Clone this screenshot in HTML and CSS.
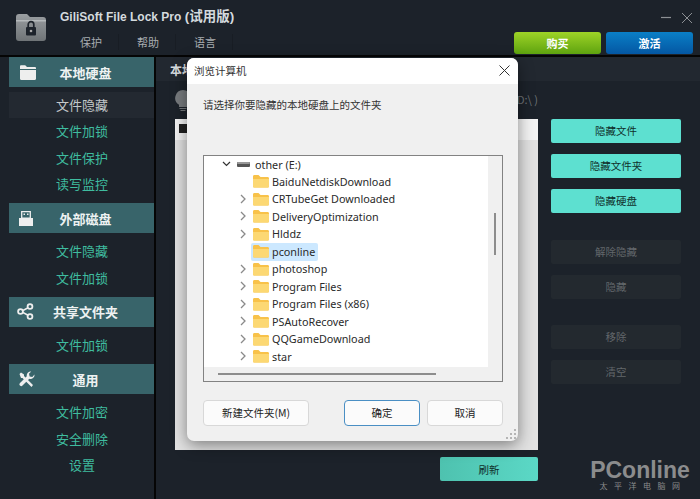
FILE: index.html
```html
<!doctype html>
<html lang="zh">

<head>
  <meta charset="utf-8">
  <title>GiliSoft File Lock Pro</title>
  <link rel="stylesheet" href="styles.css">
</head>

<body>
  <svg class="defs" width="0" height="0">
    <symbol id="folder" viewBox="0 0 16 14">
      <path d="M0 2.500C0 1.500.6 1 1.500 1h4l2 2h7c.9 0 1.500.5 1.500 1.500V12c0 1-.6 1.500-1.500 1.500h-13C.6 13.500 0 13 0 12z" fill="#f8c24a" />
      <path d="M0 5h16v7c0 1-.6 1.500-1.500 1.500h-13C.6 13.500 0 13 0 12z" fill="#fcd873" />
    </symbol>
    <symbol id="chev" viewBox="0 0 8 10">
      <path d="M2 1l4 4-4 4" fill="none" stroke="#8a8a8a" stroke-width="1.300" />
    </symbol>
    <linearGradient id="app-fill" x1="0" y1="0" x2="0" y2="1">
      <stop offset="0" stop-color="#9a9ea1" />
      <stop offset="1" stop-color="#6f7477" />
    </linearGradient>
  </svg>

  <header class="titlebar">
    <svg class="app-icon" viewBox="0 0 30 28">
      <path d="M0 4c0-2 1-3 3-3h8l3 3h13c2 0 3 1 3 3v18c0 2-1 3-3 3H3c-2 0-3-1-3-3z" fill="url(#app-fill)" />
      <path d="M0 7h30v1.500H0z" fill="#b5b9bb" />
      <rect x="10" y="14" width="10" height="8.500" rx="1" fill="#1d232b" />
      <path d="M12.200 14v-2.500a2.800 2.800 0 0 1 5.600 0V14" fill="none" stroke="#1d232b" stroke-width="1.700" />
      <circle cx="15" cy="18" r="1.300" fill="#aaa" />
    </svg>
    <div class="title-text">
      <div class="app-name">GiliSoft File Lock Pro <span class="trial">(试用版)</span></div>
      <nav class="menu">
        <span>保护</span>
        <span>帮助</span>
        <span>语言</span>
      </nav>
    </div>
    <div class="title-right">
      <div class="win-btns">
        <svg width="12" height="12" viewBox="0 0 12 12"><path d="M1 5.500h10" stroke="#8c9094" stroke-width="1.200" /></svg>
        <svg width="12" height="12" viewBox="0 0 12 12"><path d="M1 1l10 10M11 1L1 11" stroke="#8c9094" stroke-width="1" /></svg>
      </div>
      <div class="buy-btns">
        <div class="buy green">购买</div>
        <div class="buy blue">激活</div>
      </div>
    </div>
  </header>

  <div class="content">
    <aside class="sidebar">
      <section class="group">
        <h2 class="group-head">
          <svg class="ico-folder" width="16" height="15" viewBox="0 0 16 15"><path d="M0 1.500C0 .8.500.3 1.200.3h4l1.800 1.700h7.800c.7 0 1.200.5 1.200 1.200v.8H0z" fill="#eee" /><path d="M0 5h16v8.800c0 .7-.5 1.200-1.200 1.200H1.200C.5 15 0 14.500 0 13.800z" fill="#eee" /></svg>
          <span>本地硬盘</span>
        </h2>
        <ul class="items">
          <li class="active">文件隐藏</li>
          <li>文件加锁</li>
          <li>文件保护</li>
          <li>读写监控</li>
        </ul>
      </section>
      <section class="group">
        <h2 class="group-head">
          <svg class="ico-usb" width="14" height="15" viewBox="0 0 14 15"><path d="M2.700.7h8.600v6.500H2.700z" fill="none" stroke="#eee" stroke-width="1.300" /><path d="M0 7h14v8H0z" fill="#eee" /><path d="M4.500 2.500h1.500V4H4.500zM8 2.500h1.500V4H8z" fill="#eee" /></svg>
          <span>外部磁盘</span>
        </h2>
        <ul class="items">
          <li>文件隐藏</li>
          <li>文件加锁</li>
        </ul>
      </section>
      <section class="group">
        <h2 class="group-head">
          <svg class="ico-share" width="17" height="17" viewBox="0 0 17 17"><path d="M12.500 4L4 8.500l8.500 4.500" fill="none" stroke="#eee" stroke-width="1.500" /><g fill="#38646a" stroke="#eee" stroke-width="1.800"><circle cx="13" cy="3.500" r="2.400" /><circle cx="3.500" cy="8.500" r="2.400" /><circle cx="13" cy="13.500" r="2.400" /></g></svg>
          <span>共享文件夹</span>
        </h2>
        <ul class="items">
          <li>文件加锁</li>
        </ul>
      </section>
      <section class="group">
        <h2 class="group-head">
          <svg class="ico-tools" width="17" height="17" viewBox="0 0 17 17"><path d="M1.500 3L3 1.500l3 2v1.600l9 9L13.500 16l-9-9H3z" fill="#eee" /><path d="M16.500 3.500a4 4 0 0 1-5.200 4.200L4.500 14.500a1.700 1.700 0 0 1-2.500-2.500l6.800-6.800A4 4 0 0 1 13.200.5l-2.200 2.200.6 2.700 2.700.6z" fill="#eee" /></svg>
          <span>通用</span>
        </h2>
        <ul class="items">
          <li>文件加密</li>
          <li>安全删除</li>
          <li>设置</li>
        </ul>
      </section>
    </aside>

    <main class="main">
      <div class="tab-band">本地</div>
      <div class="work">
        <div class="list-col">
          <div class="hint">
            <svg width="16" height="21" viewBox="0 0 16 21"><path d="M8 0a8 8 0 0 0-4 14.800V17h8v-2.200A8 8 0 0 0 8 0z" fill="#777b7e" /><path d="M4.500 18.500h7M5.500 20.500h5" stroke="#777b7e" /></svg>
            <span class="hint-path">D:\ )</span>
          </div>
          <div class="list-panel">
            <div class="list-head"><i class="check"></i></div>
          </div>
          <div class="list-foot">
            <button class="teal refresh">刷新</button>
          </div>
        </div>
        <div class="action-col">
          <button class="teal">隐藏文件</button>
          <button class="teal">隐藏文件夹</button>
          <button class="teal">隐藏硬盘</button>
          <button class="off gap-a">解除隐藏</button>
          <button class="off">隐藏</button>
          <button class="off gap-b">移除</button>
          <button class="off">清空</button>
        </div>
      </div>
    </main>
  </div>

  <div class="logo">
    <div class="logo-name">PConline</div>
    <div class="logo-sub">太平洋电脑网</div>
  </div>

  <div class="dialog">
    <div class="dlg-title">
      <span>浏览计算机</span>
      <svg width="11" height="11" viewBox="0 0 11 11"><path d="M.5.500l10 10M10.500.500l-10 10" stroke="#333" stroke-width="1" /></svg>
    </div>
    <div class="dlg-body">
      <p class="prompt">请选择你要隐藏的本地硬盘上的文件夹</p>
      <div class="tree-box">
        <div class="tree-inner">
          <ul class="tree">
            <li class="drive">
              <svg class="open" width="9" height="6" viewBox="0 0 9 6"><path d="M1 1l3.500 3.500L8 1" fill="none" stroke="#333" stroke-width="1.200" /></svg>
              <svg class="disk" width="13" height="5" viewBox="0 0 13 5"><rect width="13" height="5" rx="1" fill="#555" /><rect y="0" width="13" height="2" rx="1" fill="#999" /></svg>
              <span>other (E:)</span>
            </li>
            <li class="leaf"><svg class="fld"><use href="#folder" /></svg><span>BaiduNetdiskDownload</span></li>
            <li><svg class="chv"><use href="#chev" /></svg><svg class="fld"><use href="#folder" /></svg><span>CRTubeGet Downloaded</span></li>
            <li><svg class="chv"><use href="#chev" /></svg><svg class="fld"><use href="#folder" /></svg><span>DeliveryOptimization</span></li>
            <li><svg class="chv"><use href="#chev" /></svg><svg class="fld"><use href="#folder" /></svg><span>Hlddz</span></li>
            <li class="leaf selected"><svg class="fld"><use href="#folder" /></svg><span>pconline</span></li>
            <li><svg class="chv"><use href="#chev" /></svg><svg class="fld"><use href="#folder" /></svg><span>photoshop</span></li>
            <li><svg class="chv"><use href="#chev" /></svg><svg class="fld"><use href="#folder" /></svg><span>Program Files</span></li>
            <li><svg class="chv"><use href="#chev" /></svg><svg class="fld"><use href="#folder" /></svg><span>Program Files (x86)</span></li>
            <li><svg class="chv"><use href="#chev" /></svg><svg class="fld"><use href="#folder" /></svg><span>PSAutoRecover</span></li>
            <li><svg class="chv"><use href="#chev" /></svg><svg class="fld"><use href="#folder" /></svg><span>QQGameDownload</span></li>
            <li><svg class="chv"><use href="#chev" /></svg><svg class="fld"><use href="#folder" /></svg><span>star</span></li>
          </ul>
        </div>
        <div class="vscroll"><i></i></div>
        <div class="hscroll"><i></i></div>
      </div>
      <div class="dlg-btns">
        <button class="win-btn new-folder">新建文件夹(M)</button>
        <button class="win-btn ok">确定</button>
        <button class="win-btn">取消</button>
      </div>
    </div>
    <svg class="grip" width="10" height="10" viewBox="0 0 10 10"><path d="M8 0h2v2H8zM4 4h2v2H4zM8 4h2v2H8zM0 8h2v2H0zM4 8h2v2H4zM8 8h2v2H8z" fill="#b5b5b5" /></svg>
  </div>
</body>

</html>
```

FILE: styles.css
```css
* {
  box-sizing: border-box;
}

html,
body {
  margin: 0;
  height: 499px;
  overflow: hidden;
}

body {
  position: relative;
  background: #1c222a;
  font-family: "Noto Sans CJK SC", sans-serif;
}

.defs {
  position: absolute;
}

ul {
  list-style: none;
  margin: 0;
  padding: 0;
}

/* title bar */
.titlebar {
  display: flex;
  height: 57px;
  padding: 13px 7px 0 16px;
  background: #1c222a;
  border-bottom: 2px solid #050505;
}

.app-icon {
  width: 30px;
  height: 28px;
}

.title-text {
  margin: -5px 0 0 14px;
}

.app-name {
  color: #d4dade;
  font-family: "Liberation Sans", "Noto Sans CJK SC", sans-serif;
  font-size: 12px;
  font-weight: 700;
  line-height: 18px;
  white-space: nowrap;
}

.trial {
  font-size: 13.500px;
}

.menu {
  display: flex;
  margin: 8px 0 0 2px;
  color: #a8adb1;
  font-size: 11px;
  line-height: 16px;
}

.menu span {
  width: 57px;
  padding-left: 18px;
  border-right: 1px solid #181d24;
}

.title-right {
  margin-left: auto;
}

.win-btns {
  display: flex;
  justify-content: flex-end;
  gap: 9px;
  height: 19px;
  margin-top: -3px;
}

.win-btns svg {
  margin-top: 2px;
}

.buy-btns {
  display: flex;
  gap: 5px;
  margin-top: 3px;
}

.buy {
  width: 87px;
  height: 22px;
  border-radius: 3px;
  color: #fff;
  font-size: 11px;
  font-weight: 700;
  line-height: 22px;
  text-align: center;
}

.green {
  background: linear-gradient(#9ed327, #5ea30f);
}

.blue {
  background: linear-gradient(#0a7fc6, #0457a3);
}

/* sidebar and main */
.content {
  display: flex;
  height: 442px;
}

.sidebar {
  width: 156px;
  padding-left: 9px;
  border-right: 2px solid #050505;
}

.group {
  margin-bottom: 6px;
}

.group-head {
  display: grid;
  grid-template-columns: 33px 87px;
  align-items: center;
  height: 30px;
  margin: 0;
  background: #38646a;
  color: #eef2f2;
  font-size: 13px;
  font-weight: 700;
}

.ico-folder {
  margin-left: 11px;
}

.ico-usb {
  margin-left: 10px;
}

.ico-share {
  margin-left: 8px;
}

.ico-tools {
  margin-left: 9px;
}

.group-head span {
  text-align: center;
}

.items {
  padding-top: 5px;
}

.items li {
  height: 26.330px;
  padding-left: 1px;
  color: #3fbc9f;
  font-size: 13px;
  line-height: 25px;
  text-align: center;
}

.items li.active {
  background: #232931;
  color: #c4c8ca;
}

.main {
  flex: 1;
}

.tab-band {
  height: 24px;
  padding-left: 14px;
  background: #222830;
  color: #d8dcde;
  font-size: 12px;
  font-weight: 700;
  line-height: 26px;
}

.work {
  display: flex;
  gap: 13px;
  padding-left: 19px;
}

.list-col {
  width: 363px;
}

.hint {
  display: flex;
  justify-content: space-between;
  height: 38px;
  padding-top: 9px;
  color: #6e7377;
  font-size: 11px;
}

.hint-path {
  padding-top: 1px;
}

.list-panel {
  height: 331px;
  background: #e2e2e2;
}

.list-head {
  height: 21px;
  padding: 5px 0 0 4px;
  background: #f4f4f4;
}

.check {
  display: block;
  width: 9px;
  height: 9px;
  background: #222;
}

.list-foot {
  display: flex;
  justify-content: flex-end;
  padding-top: 7px;
}

.action-col {
  display: flex;
  flex-direction: column;
  gap: 11.500px;
  width: 130px;
  padding-top: 38px;
}

button {
  font-family: inherit;
  padding: 0;
  border: 0;
}

.teal {
  height: 23.500px;
  border-radius: 2px;
  background: #5de0d0;
  color: #10302c;
  font-size: 10.500px;
}

.refresh {
  width: 98px;
  height: 24px;
  background: linear-gradient(90deg, #4ec2af, #5bd8c6);
}

.off {
  height: 23.500px;
  border-radius: 2px;
  background: #23292f;
  color: #62676b;
  font-size: 10.500px;
}

.gap-a {
  margin-top: 16px;
}

.gap-b {
  margin-top: 15px;
}

/* watermark */
.logo {
  position: absolute;
  top: 459px;
  left: 589px;
  width: 102px;
  color: #8b8c8d;
  text-align: center;
}

.logo-name {
  font-family: "Liberation Sans", sans-serif;
  font-size: 23px;
  font-weight: 700;
  line-height: 22px;
  white-space: nowrap;
}

.logo-sub {
  margin-right: -6px;
  font-size: 8px;
  line-height: 9px;
  letter-spacing: 6.500px;
  white-space: nowrap;
}

/* browse dialog */
.dialog {
  position: absolute;
  top: 58px;
  left: 187px;
  width: 331px;
  height: 383px;
  border-radius: 7px;
  background: #f0f0f0;
  box-shadow: 0 4px 16px rgba(0, 0, 0, 0.45);
}

.dlg-title {
  display: flex;
  justify-content: space-between;
  align-items: center;
  height: 26px;
  padding: 0 8px 2px 7px;
  border-radius: 7px 7px 0 0;
  background: #fff;
  color: #333;
  font-size: 10.500px;
}

.dlg-body {
  padding: 0 15px 0 16px;
}

.prompt {
  margin: 0;
  padding-top: 13px;
  height: 71px;
  color: #333;
  font-size: 10.500px;
  line-height: 16px;
}

.tree-box {
  position: relative;
  height: 227px;
  border: 1px solid #828282;
  background: #f0f0f0;
}

.tree-inner {
  width: 284px;
  height: 211px;
  background: #fff;
}

.tree {
  padding-left: 17px;
  font-family: "Noto Sans", sans-serif;
  font-size: 10.800px;
  color: #2a2a2a;
}

.tree li {
  display: flex;
  align-items: center;
  height: 17.500px;
}

.tree .drive {
  height: 16.500px;
}

.open {
  margin: 0 6px 0 1px;
}

.disk {
  margin-right: 5px;
}

.chv {
  width: 8px;
  height: 10px;
  margin: 0 6px 0 18px;
}

.leaf {
  padding-left: 32px;
}

.fld {
  width: 16px;
  height: 14px;
  margin-right: 3px;
}

.tree .selected {
  position: relative;
  z-index: 0;
}

.tree .selected::before {
  content: "";
  position: absolute;
  z-index: -1;
  top: 0;
  left: 30px;
  width: 67px;
  height: 18px;
  border-radius: 2px;
  background: #cce8ff;
}

.vscroll i {
  position: absolute;
  top: 57px;
  right: 6px;
  width: 2px;
  height: 42px;
  background: #8d8d8d;
}

.hscroll i {
  position: absolute;
  top: 217px;
  left: 14px;
  width: 218px;
  height: 2px;
  background: #8d8d8d;
}

.dlg-btns {
  display: flex;
  margin-top: 18px;
}

.win-btn {
  width: 76px;
  height: 26px;
  margin-left: 7px;
  padding-bottom: 2px;
  border: 1px solid #d8d8d8;
  border-radius: 4px;
  background: #fbfbfb;
  color: #222;
  font-size: 10.500px;
}

.new-folder {
  width: 106px;
  margin: 0 35px 0 0;
}

.ok {
  margin-left: 0;
  border: 1px solid #4a8fc4;
}

.grip {
  position: absolute;
  right: 2px;
  bottom: 2px;
}
```
